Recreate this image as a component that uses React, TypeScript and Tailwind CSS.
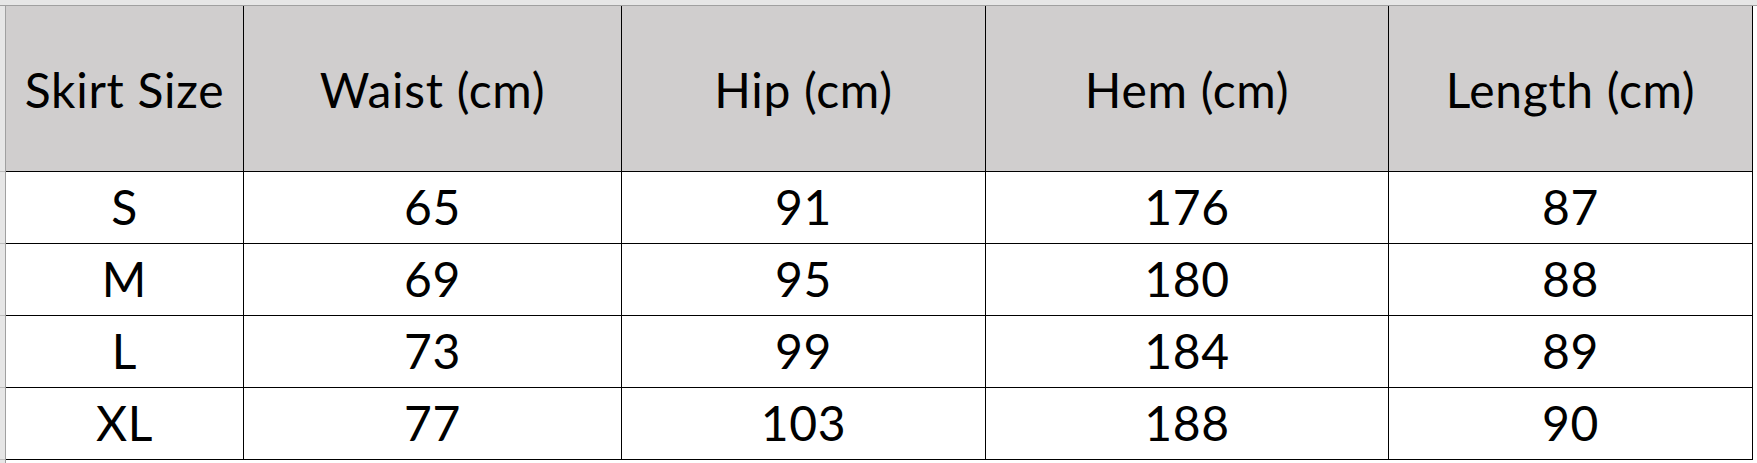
const headers = ["Skirt Size", "Waist (cm)", "Hip (cm)", "Hem (cm)", "Length (cm)"];

const rows = [
  ["S", "65", "91", "176", "87"],
  ["M", "69", "95", "180", "88"],
  ["L", "73", "99", "184", "89"],
  ["XL", "77", "103", "188", "90"],
];

export default function App() {
  return (
    <div className="w-[1757px] h-[463px] bg-white overflow-hidden font-['Lato','Liberation_Sans',sans-serif] text-black">
      {/* sheet top edge */}
      <div className="h-[6px] bg-[#e6e6e6] border-b border-[#a0a0a0]" />
      <div className="flex">
        {/* row header strip */}
        <div className="w-[6px] flex flex-col bg-[#e6e6e6] border-r border-[#a0a0a0]">
          <div className="h-[166px] border-b border-[#bdbdbd]" />
          {rows.map((_, i) => (
            <div key={i} className="h-[72px] border-b border-[#bdbdbd]" />
          ))}
          <div className="h-[3px]" />
        </div>

        <div className="grid grid-cols-[238px_378px_364px_403px_364px] grid-rows-[166px_72px_72px_72px_72px]">
          {headers.map((h) => (
            <div
              key={h}
              className="flex items-center justify-center bg-[#d0cece] border-r border-b border-black text-[48px] tracking-[0.7px] leading-none pt-[2px]"
            >
              {h}
            </div>
          ))}
          {rows.map((r) =>
            r.map((c, j) => (
              <div
                key={r[0] + j}
                className="flex items-center justify-center bg-white border-r border-b border-black text-[48px] tracking-[0.7px] leading-none pb-[2px]"
              >
                {c}
              </div>
            ))
          )}
        </div>
      </div>
    </div>
  );
}
